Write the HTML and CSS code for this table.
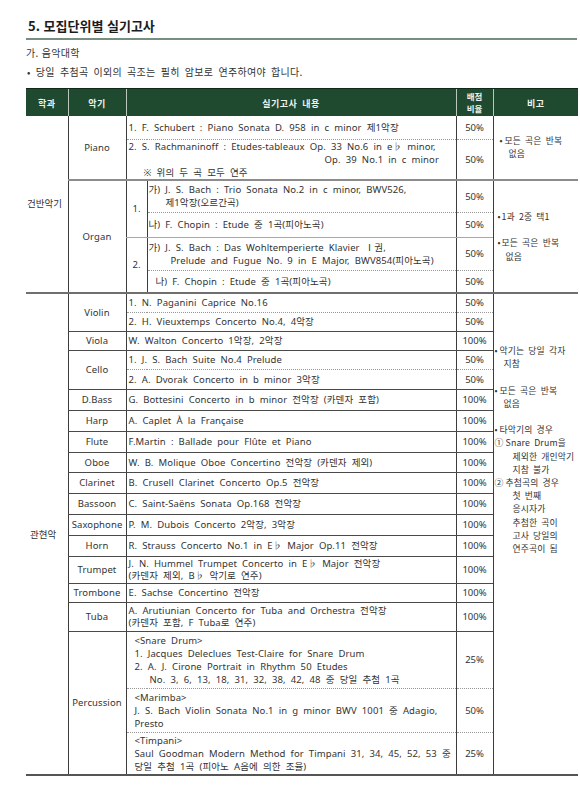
FILE: index.html
```html
<!DOCTYPE html>
<html lang="ko">
<head>
<meta charset="utf-8">
<title>모집단위별 실기고사</title>
<link rel="stylesheet" href="styles.css">
</head>
<body>
<div class="page">
  <h1 class="title">5. 모집단위별 실기고사</h1>
  <p class="sub">가. 음악대학</p>
  <p class="lead">• 당일 추첨곡 이외의 곡조는 필히 암보로 연주하여야 합니다.</p>
  <table class="exam">
    <colgroup>
      <col class="c-dept"><col class="c-inst"><col class="c-num"><col class="c-text"><col class="c-pct"><col class="c-note">
    </colgroup>
    <thead>
      <tr class="hd">
        <th class="first">학과</th>
        <th>악기</th>
        <th colspan="2">실기고사 내용</th>
        <th class="th-pct">배점<br>비율</th>
        <th>비고</th>
      </tr>
    </thead>
    <tbody>
      <tr class="h24">
        <td class="dept grp" rowspan="6">건반악기</td>
        <td class="inst sec" rowspan="2">Piano</td>
        <td class="txt dot" colspan="2">1. F. Schubert : Piano Sonata D. 958 in c minor 제1악장</td>
        <td class="pct dot">50%</td>
        <td class="note note-piano sec" rowspan="2"><p class="ni"><span class="bul">•</span>모든 곡은 반복<br>없음</p></td>
      </tr>
      <tr class="h39">
        <td class="txt sec" colspan="2">2. S. Rachmaninoff : Etudes-tableaux Op. 33 No.6 in e♭ minor,<br><span class="op-indent">Op. 39 No.1 in c minor</span><br><span class="ref-indent">※ 위의 두 곡 모두 연주</span></td>
        <td class="pct sec">50%</td>
      </tr>
      <tr class="h32">
        <td class="inst grp" rowspan="4">Organ</td>
        <td class="num thin" rowspan="2">1.</td>
        <td class="txt org dot">가) J. S. Bach : Trio Sonata No.2 in c minor, BWV526,<br><span class="sub-indent-a">제1악장(오르간곡)</span></td>
        <td class="pct dot">50%</td>
        <td class="note note-organ grp" rowspan="4"><p class="ni"><span class="bul">•</span>1과 2중 택1</p><p class="ni gap"><span class="bul">•</span>모든 곡은 반복<br>없음</p></td>
      </tr>
      <tr class="h25">
        <td class="txt org thin">나) F. Chopin : Etude 중 1곡(피아노곡)</td>
        <td class="pct thin">50%</td>
      </tr>
      <tr class="h33">
        <td class="num grp" rowspan="2">2.</td>
        <td class="txt org dot">가) J. S. Bach : Das Wohltemperierte Klavier Ⅰ권,<br><span class="sub-indent-b">Prelude and Fugue No. 9 in E Major, BWV854(피아노곡)</span></td>
        <td class="pct dot">50%</td>
      </tr>
      <tr class="h23">
        <td class="txt org2 grp">나) F. Chopin : Etude 중 1곡(피아노곡)</td>
        <td class="pct grp">50%</td>
      </tr>

      <tr class="h19">
        <td class="dept dept-orch end" rowspan="19">관현악</td>
        <td class="inst" rowspan="2">Violin</td>
        <td class="txt dot" colspan="2">1. N. Paganini Caprice No.16</td>
        <td class="pct dot">50%</td>
        <td class="note note-orch end" rowspan="19">
          <p class="ni"><span class="bul">•</span>악기는 당일 각자<br>지참</p>
          <p class="ni gap"><span class="bul">•</span>모든 곡은 반복<br>없음</p>
          <p class="ni gap"><span class="bul">•</span>타악기의 경우</p>
          <p class="nn"><span class="circ">①</span>Snare Drum을<br>제외한 개인악기<br>지참 불가</p>
          <p class="nn"><span class="circ">②</span>추첨곡의 경우<br>첫 번째<br>응시자가<br>추첨한 곡이<br>고사 당일의<br>연주곡이 됨</p>
        </td>
      </tr>
      <tr class="h19">
        <td class="txt" colspan="2">2. H. Vieuxtemps Concerto No.4, 4악장</td>
        <td class="pct">50%</td>
      </tr>
      <tr class="h19">
        <td class="inst">Viola</td>
        <td class="txt" colspan="2">W. Walton Concerto 1악장, 2악장</td>
        <td class="pct">100%</td>
      </tr>
      <tr class="h19">
        <td class="inst" rowspan="2">Cello</td>
        <td class="txt dot" colspan="2">1. J. S. Bach Suite No.4 Prelude</td>
        <td class="pct dot">50%</td>
      </tr>
      <tr class="h20">
        <td class="txt" colspan="2">2. A. Dvorak Concerto in b minor 3악장</td>
        <td class="pct">50%</td>
      </tr>
      <tr class="h21">
        <td class="inst">D.Bass</td>
        <td class="txt" colspan="2">G. Bottesini Concerto in b minor 전악장 (카덴자 포함)</td>
        <td class="pct">100%</td>
      </tr>
      <tr class="h21">
        <td class="inst">Harp</td>
        <td class="txt" colspan="2">A. Caplet À la Française</td>
        <td class="pct">100%</td>
      </tr>
      <tr class="h21">
        <td class="inst">Flute</td>
        <td class="txt" colspan="2">F.Martin : Ballade pour Flûte et Piano</td>
        <td class="pct">100%</td>
      </tr>
      <tr class="h20">
        <td class="inst">Oboe</td>
        <td class="txt" colspan="2">W. B. Molique Oboe Concertino 전악장 (카덴자 제외)</td>
        <td class="pct">100%</td>
      </tr>
      <tr class="h21">
        <td class="inst">Clarinet</td>
        <td class="txt" colspan="2">B. Crusell Clarinet Concerto Op.5 전악장</td>
        <td class="pct">100%</td>
      </tr>
      <tr class="h21">
        <td class="inst">Bassoon</td>
        <td class="txt" colspan="2">C. Saint-Saëns Sonata Op.168 전악장</td>
        <td class="pct">100%</td>
      </tr>
      <tr class="h21">
        <td class="inst">Saxophone</td>
        <td class="txt" colspan="2">P. M. Dubois Concerto 2악장, 3악장</td>
        <td class="pct">100%</td>
      </tr>
      <tr class="h21">
        <td class="inst">Horn</td>
        <td class="txt" colspan="2">R. Strauss Concerto No.1 in E♭ Major Op.11 전악장</td>
        <td class="pct">100%</td>
      </tr>
      <tr class="h27">
        <td class="inst">Trumpet</td>
        <td class="txt tight" colspan="2">J. N. Hummel Trumpet Concerto in E♭ Major 전악장<br>(카덴자 제외, B♭ 악기로 연주)</td>
        <td class="pct">100%</td>
      </tr>
      <tr class="h19">
        <td class="inst">Trombone</td>
        <td class="txt" colspan="2">E. Sachse Concertino 전악장</td>
        <td class="pct">100%</td>
      </tr>
      <tr class="h29">
        <td class="inst">Tuba</td>
        <td class="txt tight" colspan="2">A. Arutiunian Concerto for Tuba and Orchestra 전악장<br>(카덴자 포함, F Tuba로 연주)</td>
        <td class="pct">100%</td>
      </tr>
      <tr class="h57">
        <td class="inst end" rowspan="3">Percussion</td>
        <td class="txt perc dot" colspan="2">&lt;Snare Drum&gt;<br>1. Jacques Deleclues Test-Claire for Snare Drum<br>2. A. J. Cirone Portrait in Rhythm 50 Etudes<br><span class="ref-indent">No. 3, 6, 13, 18, 31, 32, 38, 42, 48 중 당일 추첨 1곡</span></td>
        <td class="pct dot">25%</td>
      </tr>
      <tr class="h44">
        <td class="txt perc dot" colspan="2">&lt;Marimba&gt;<br>J. S. Bach Violin Sonata No.1 in g minor BWV 1001 중 Adagio,<br>Presto</td>
        <td class="pct dot">50%</td>
      </tr>
      <tr class="h43">
        <td class="txt perc end" colspan="2">&lt;Timpani&gt;<br>Saul Goodman Modern Method for Timpani 31, 34, 45, 52, 53 중<br>당일 추첨 1곡 (피아노 A음에 의한 조율)</td>
        <td class="pct end">25%</td>
      </tr>
    </tbody>
  </table>
</div>
</body>
</html>
```

FILE: styles.css
```css
html, body {
  margin: 0;
  padding: 0;
  background: #ffffff;
}

body {
  font-family: "Noto Sans", "Noto Sans CJK KR", sans-serif;
  color: #333333;
}

.page {
  padding: 18px 2px 0 26px;
}

.title {
  margin: 0 1px 0 0;
  padding: 0 0 4px 2px;
  font-family: "Noto Sans CJK KR", sans-serif;
  font-size: 13px;
  font-weight: 700;
  line-height: 16px;
  color: #1c1c1c;
  border-bottom: 2px solid #778f80;
}

.sub {
  margin: 6px 0 0 0;
  font-family: "Noto Sans CJK KR", sans-serif;
  font-size: 10px;
  line-height: 14px;
  letter-spacing: 0.3px;
  color: #333333;
}

.lead {
  margin: 5px 0 0 1px;
  font-family: "Noto Sans CJK KR", sans-serif;
  font-size: 10px;
  line-height: 14px;
  letter-spacing: 0.3px;
  word-spacing: 2px;
  color: #333333;
}

.exam {
  margin-top: 9px;
  width: 552px;
  border-collapse: collapse;
  table-layout: fixed;
  font-size: 9.5px;
  line-height: 13px;
  letter-spacing: 0.1px;
  word-spacing: 2.5px;
}

.c-dept { width: 42px; }
.c-inst { width: 58px; }
.c-num { width: 21px; }
.c-text { width: 309px; }
.c-pct { width: 37px; }
.c-note { width: 85px; }

.exam th {
  background: #1f4a2f;
  color: #eef3ef;
  font-family: "Noto Sans CJK KR", sans-serif;
  font-size: 9px;
  font-weight: 700;
  line-height: 11px;
  letter-spacing: 0.5px;
  word-spacing: 2px;
  padding: 3px 0 0 0;
  border-top: 1px solid #0f2a18;
  border-left: 1px solid #b9c7bd;
  text-align: center;
  vertical-align: middle;
}

.exam th.first { border-left: none; }

.exam th.th-pct {
  padding-top: 0;
  font-size: 8.5px;
  line-height: 12px;
  letter-spacing: 0;
}

.hd { height: 27px; }

.exam td {
  padding: 0;
  vertical-align: middle;
  border-left: 1px solid #3c3c3c;
  border-bottom: 1px solid #4a4a4a;
}

.exam td.dept {
  border-left: none;
  text-align: left;
  padding-left: 1px;
  font-family: "Noto Sans CJK KR", sans-serif;
  letter-spacing: 0;
}

.exam td.dept-orch { padding-left: 4px; }

.inst { text-align: center; }

.txt {
  padding-left: 2px !important;
  white-space: nowrap;
  text-align: left;
}

.txt.org { padding-left: 1px !important; }
.txt.org2 { padding-left: 8px !important; }
.txt.perc { padding-left: 8px !important; }
.txt.tight { line-height: 11.5px; }

.num { text-align: center; }

.pct {
  text-align: center;
  letter-spacing: 0;
}

.op-indent { padding-left: 196px; }
.ref-indent { padding-left: 15px; }
.sub-indent-a { padding-left: 17px; }
.sub-indent-b { padding-left: 22px; }

.exam td.dot { border-bottom: 1px dotted #9a9a9a; }
.exam td.thin { border-bottom: 1px solid #a8a8a8; }
.exam td.sec { border-bottom: 2px solid #8c8c8c; }
.exam td.grp { border-bottom: 2px solid #6f6f6f; }
.exam td.end { border-bottom: 2px solid #555555; }

.note {
  font-family: "Noto Sans CJK KR", sans-serif;
  font-size: 8.8px;
  letter-spacing: 0.15px;
  word-spacing: 1.5px;
  line-height: 13.2px;
  white-space: nowrap;
}

.note p { margin: 0; }
.note p.gap { margin-top: 13.2px; }

.ni {
  padding-left: 15px;
  text-indent: -9px;
}

.bul {
  display: inline-block;
  width: 5px;
  text-indent: 0;
}

.note-organ .ni { padding-left: 12px; text-indent: -8px; }
.note-organ .bul { width: 4px; }
.note-organ { padding-bottom: 10px; }

.note-orch {
  vertical-align: top !important;
  padding-top: 50px !important;
}

.note-orch .ni { padding-left: 10px; text-indent: -9px; }

.nn {
  padding-left: 19px;
  text-indent: -18px;
}

.circ {
  display: inline-block;
  width: 11px;
  text-indent: 0;
}

.h19 { height: 19px; }
.h20 { height: 20px; }
.h21 { height: 21px; }
.h23 { height: 23px; }
.h24 { height: 24px; }
.h25 { height: 25px; }
.h27 { height: 27px; }
.h29 { height: 29px; }
.h32 { height: 32px; }
.h33 { height: 33px; }
.h39 { height: 39px; }
.h43 { height: 43px; }
.h44 { height: 44px; }
.h57 { height: 57px; }
```
